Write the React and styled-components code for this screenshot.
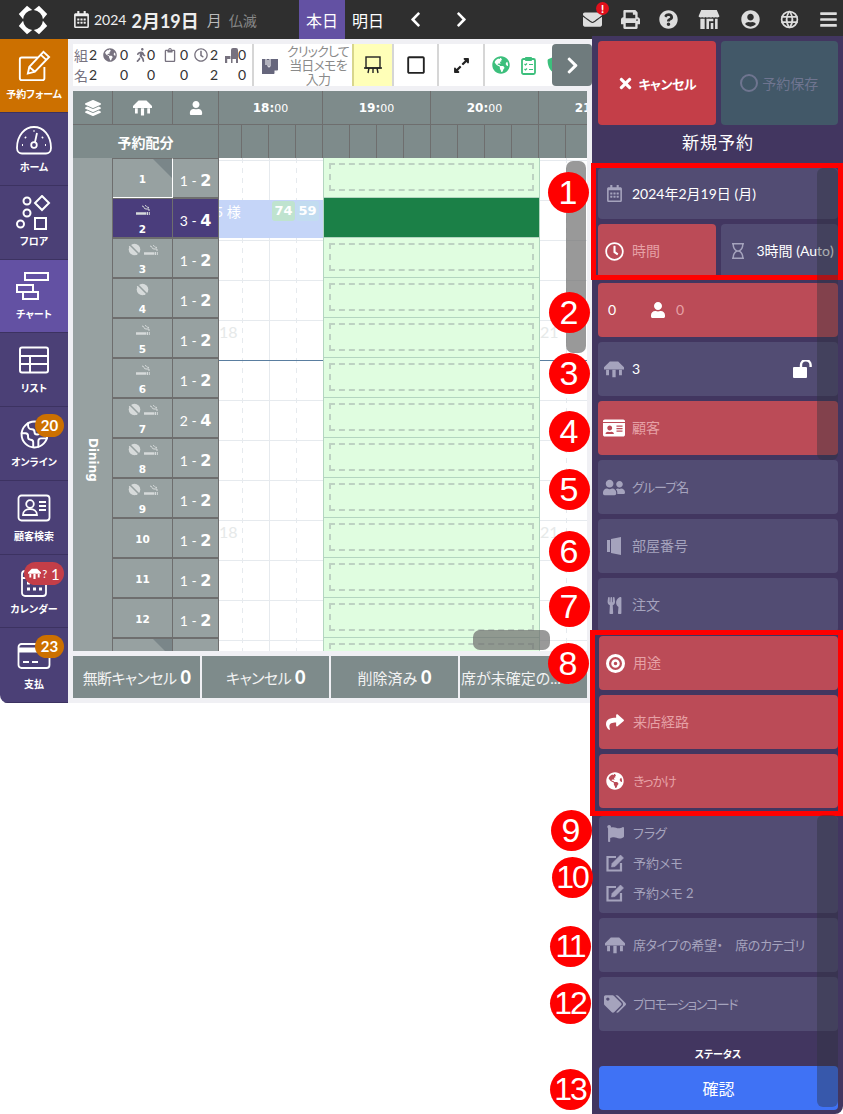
import React from "react";
import styled, { createGlobalStyle } from "styled-components";
import {
  FaBars, FaEnvelope, FaExpandAlt, FaFlag, FaGlobeAmericas, FaIdCard, FaLayerGroup,
  FaPrint, FaQuestionCircle, FaRegCalendarAlt, FaRegClipboard, FaRegClock, FaRegHourglass,
  FaRegSquare, FaShare, FaTags, FaTimes, FaUser, FaUserCircle, FaUserFriends,
  FaUtensils, FaWalking, FaShieldAlt, FaChevronLeft, FaChevronRight,
} from "react-icons/fa";
import { TbWorld } from "react-icons/tb";
import { Earth } from "lucide-react";

const sans = `Lato, "Noto Sans CJK JP", sans-serif`;
const wide = `"DejaVu Sans", "Noto Sans CJK JP", sans-serif`;

const GlobalStyle = createGlobalStyle`
  html, body { margin: 0; padding: 0; background: #fff; }
  body {
    font-family: ${sans};
    font-feature-settings: "palt";
    width: 843px;
    height: 1114px;
    overflow: hidden;
  }
  * { box-sizing: border-box; }
`;

// drawings with no match in the icon packages
const TableIcon = ({ size = 20 }) => (
  <svg width={size} height={size} viewBox="0 0 24 24" fill="currentColor">
    <path d="M7 3h10l7 7v2.500H0V10z" />
    <path d="M2.500 13h3.500v6.500H2.500zM10 13h4v9h-4zM18 13h3.500v6.500H18z" />
  </svg>
);

const ChairIcon = () => (
  <svg width="13" height="15" viewBox="0 0 13 15" fill="currentColor">
    <path d="M6 2a2 2 0 0 1 2-2h3a2 2 0 0 1 2 2v13h-2v-4H7.500v4H6z" />
    <path d="M0 8h5.500v3H2.200v4H0z" />
  </svg>
);

const MemoIcon = () => (
  <svg width="16" height="19" viewBox="0 0 16 19" fill="currentColor">
    <path d="M0 3h16v11l-4 4H0z" />
    <path d="M12.500 18v-3.500H16z" fill="#fff" />
    <path d="M4 9V3a2 2 0 0 1 4 0v7a1 1 0 0 1-2 0V4" fill="none" stroke="#fff" strokeWidth="1" />
  </svg>
);

const ClipboardIcon = () => (
  <svg width="15" height="19" viewBox="0 0 15 19" fill="none" stroke="currentColor">
    <rect x="1" y="3" width="13" height="15" rx="1.500" strokeWidth="1.800" />
    <path d="M4.500 1.500h6v3h-6z" fill="currentColor" strokeWidth="1" />
    <path d="M3.500 8l1 1 1.500-1.500M3.500 13l1 1 1.500-1.500M8 8.500h4M8 13.500h4" strokeWidth="1.200" />
  </svg>
);

const UnlockIcon = () => (
  <svg width="20" height="18" viewBox="0 0 20 18" fill="none" stroke="#fff">
    <rect x="0" y="7" width="14" height="11" rx="1" fill="#fff" stroke="none" />
    <path d="M8 8V5a4.800 4.800 0 0 1 9.600 0v2" strokeWidth="2.400" />
  </svg>
);

const Smoke = () => (
  <svg width="14" height="10" viewBox="0 0 14 10" fill="none" stroke="currentColor">
    <path d="M0 8.500h10.500" strokeWidth="2.500" />
    <path d="M11.500 7v3M13.300 7v3" strokeWidth="1" />
    <path d="M6 1c3 0 1 3 4 3h3v2M9 .5c2 0 1 2 4 2" strokeWidth="1" />
  </svg>
);

const NoNet = () => (
  <svg width="13" height="13" viewBox="0 0 13 13">
    <circle cx="6.500" cy="6.500" r="5.800" fill="currentColor" />
    <path d="M1.500 1.500l10 10" stroke="#97a1a1" strokeWidth="1.600" />
    <path d="M1 3l8 9" stroke="currentColor" strokeWidth="1" />
  </svg>
);

const Logo = () => (
  <svg width="30" height="30" viewBox="0 0 30 30" fill="#fff">
    <path d="M9 .8l5.200 4.300A10 10 0 0 0 5.100 14.200L.8 9z" />
    <path d="M21 .8l-5.200 4.300A10 10 0 0 1 24.900 14.200L29.200 9z" />
    <path d="M9 29.200l5.200-4.300A10 10 0 0 1 5.100 15.800L.8 21z" />
    <path d="M21 29.200l-5.200-4.300A10 10 0 0 0 24.900 15.800L29.200 21z" />
  </svg>
);

const DoorIcon = () => (
  <svg width="16" height="18" viewBox="0 0 16 18" fill="currentColor">
    <path d="M1 3h3v12H1z" />
    <path d="M5 2l10-2v18l-10-2z" />
  </svg>
);

const EditIcon = () => (
  <svg width="20" height="20" viewBox="0 0 20 20" fill="none" stroke="currentColor">
    <path d="M11 4H2.500v13.500H16V10" strokeWidth="2.200" />
    <path d="M7 10.500L15.500 2l3 3L10 13.500l-3.500.5z" fill="currentColor" strokeWidth="0.600" />
  </svg>
);

const navIcons = {
  form: (
    <svg width="36" height="34" viewBox="0 0 36 36" fill="none" stroke="#fff" strokeWidth="2">
      <path d="M22 9H5a2 2 0 0 0-2 2v20a2 2 0 0 0 2 2h22a2 2 0 0 0 2-2V19" />
      <path d="M13 19L28 3l6 5.500L19 24l-7.500 2z" />
      <path d="M25 6l6 5.500M13 19l6 5" />
    </svg>
  ),
  home: (
    <svg width="36" height="30" viewBox="0 0 36 30" fill="none" stroke="#fff" strokeWidth="1.800">
      <path d="M6 28.500h24c2.500 0 5-2 5-5.500C35 10 27 2 18 2S1 10 1 23c0 3.500 2.500 5.500 5 5.500z" />
      <circle cx="18" cy="20" r="2.800" />
      <path d="M19 17l2-9" />
      <path d="M6 20h1M30 20h-1M9 12l1 1M27 12l-1 1M17.500 6h1" strokeWidth="2" />
    </svg>
  ),
  floor: (
    <svg width="36" height="36" viewBox="0 0 36 36" fill="none" stroke="#fff" strokeWidth="2">
      <circle cx="11" cy="6" r="3.500" />
      <circle cx="11" cy="18" r="3.500" />
      <circle cx="4.500" cy="29" r="3.500" />
      <rect x="19" y="23" width="11" height="11" />
      <path d="M26 1l7 7-7 7-7-7z" />
    </svg>
  ),
  chart: (
    <svg width="36" height="30" viewBox="0 0 36 30" fill="none" stroke="#fff" strokeWidth="2">
      <rect x="9" y="1" width="23" height="7" />
      <rect x="1" y="13" width="16" height="7" />
      <rect x="7" y="20" width="15" height="7" />
    </svg>
  ),
  list: (
    <svg width="32" height="28" viewBox="0 0 32 28" fill="none" stroke="#fff" strokeWidth="2">
      <rect x="2" y="1.500" width="28" height="25" rx="2" />
      <path d="M2 10h28M2 18h28M12 10v16.500" />
    </svg>
  ),
  online: <Earth size={31} strokeWidth={1.500} color="#fff" />,
  customer: (
    <svg width="34" height="28" viewBox="0 0 34 28" fill="none" stroke="#fff" strokeWidth="1.800">
      <rect x="1.500" y="1.500" width="31" height="25" rx="3" />
      <circle cx="13" cy="10" r="3.800" />
      <path d="M6 21c0-8 14-8 14 0zM22 8h7M22 12h7M22 16h7" />
    </svg>
  ),
  calendar: (
    <svg width="28" height="30" viewBox="0 0 28 30" fill="none" stroke="#fff" strokeWidth="1.800">
      <rect x="2" y="4" width="24" height="25" rx="3" />
      <path d="M2 11h24" />
      <path d="M7 16h3M13 16h3M19 16h3M7 22h3M13 22h3M19 22h3" strokeWidth="3" />
    </svg>
  ),
  payment: (
    <svg width="34" height="28" viewBox="0 0 34 28" fill="none" stroke="#fff" strokeWidth="1.800">
      <rect x="1.500" y="2" width="31" height="24" rx="3" />
      <path d="M1.500 8h31" strokeWidth="5" />
      <path d="M6 20h6M15 20h6" />
    </svg>
  ),
};

const navItems = [
  { key: "form", label: "予約フォーム", tone: "orange", h: 74 },
  { key: "home", label: "ホーム", h: 73 },
  { key: "floor", label: "フロア", h: 74 },
  { key: "chart", label: "チャート", tone: "active", h: 73 },
  { key: "list", label: "リスト", h: 74 },
  { key: "online", label: "オンライン", h: 74, badge: "20" },
  { key: "customer", label: "顧客検索", h: 74 },
  { key: "calendar", label: "カレンダー", h: 73, alert: "1" },
  { key: "payment", label: "支払", h: 75, badge: "23" },
];

const tables = [
  { n: 1, cap: ["1", "2"], notch: true, white: true },
  { n: 2, cap: ["3", "4"], smoke: true, selected: true },
  { n: 3, cap: ["1", "2"], smoke: true, noNet: true },
  { n: 4, cap: ["1", "2"], noNet: true },
  { n: 5, cap: ["1", "2"], smoke: true, mark: true },
  { n: 6, cap: ["1", "2"], smoke: true, blue: true },
  { n: 7, cap: ["2", "4"], smoke: true, noNet: true },
  { n: 8, cap: ["1", "2"], smoke: true, noNet: true },
  { n: 9, cap: ["1", "2"], smoke: true, noNet: true },
  { n: 10, cap: ["1", "2"], mark: true },
  { n: 11, cap: ["1", "2"] },
  { n: 12, cap: ["1", "2"] },
  { n: "", cap: ["", ""], notch: true },
];

const steps = [
  ["1", 568, 192], ["2", 569, 312], ["3", 569, 373], ["4", 569, 431], ["5", 569, 489],
  ["6", 569, 551], ["7", 569, 606], ["8", 568, 663], ["9", 571, 830], ["10", 572, 877],
  ["11", 570, 946], ["12", 570, 1003], ["13", 570, 1089],
];

const stats = [
  { label: "組", alt: "名", top: "2", bottom: "2", w: [15, 14] },
  { icon: <FaGlobeAmericas size={14} />, top: "0", bottom: "0", w: [17, 15] },
  { icon: <FaWalking size={14} />, top: "0", bottom: "0", w: [12, 16] },
  { icon: <FaRegClipboard size={14} />, top: "0", bottom: "0", w: [17, 14] },
  { icon: <FaRegClock size={14} />, top: "2", bottom: "2", w: [16, 15] },
  { icon: <ChairIcon />, top: "0", bottom: "0", w: [13, 12] },
];

const quarters = [23, 27, 27, 27, 27, 27, 27, 27, 27, 27, 27, 27, 27, 27, 27, 27];

const App = () => (
  <>
    <GlobalStyle />
    <Page>
      <TopBar>
        <LogoCell><Logo /></LogoCell>
        <DateBox>
          <FaRegCalendarAlt size={17} />
          <Year>2024</Year>
          <BigDate>2月19日</BigDate>
          <Weekday>月</Weekday>
          <Rokuyo>仏滅</Rokuyo>
        </DateBox>
        <DayTab $active>本日</DayTab>
        <DayTab>明日</DayTab>
        <Pager><FaChevronLeft size={17} /><FaChevronRight size={17} /></Pager>
        <TopIcons>
          <MailIcon>
            <FaEnvelope size={19} />
            <MailDot>!</MailDot>
          </MailIcon>
          <FaPrint size={19} />
          <FaQuestionCircle size={19} />
          <StoreIcon viewBox="0 0 24 22" fill="currentColor">
            <path d="M3 0h18l3 7c0 2-3 2-4 1-1 1-3 1-4 0-1 1-3 1-4 0-1 1-3 1-4 0-1 1-3 1-4 0-1 1-4 1-4-1z" />
            <path d="M2 10h5v12H2zM9 10h8v3h-5v9H9zM19 10h3v12h-3zM14 15h3v7h-3z" />
          </StoreIcon>
          <FaUserCircle size={19} />
          <TbWorld size={21} />
          <FaBars size={19} />
        </TopIcons>
      </TopBar>

      <Body>
        <Sidebar>
          {navItems.map((item) => (
            <NavItem key={item.key} $tone={item.tone} $h={item.h}>
              <NavIcon>{navIcons[item.key]}</NavIcon>
              <NavLabel>{item.label}</NavLabel>
              {item.badge && <NavBadge>{item.badge}</NavBadge>}
              {item.alert && <NavAlert><TableIcon size={13} />?<b>{item.alert}</b></NavAlert>}
            </NavItem>
          ))}
        </Sidebar>

        <Main>
          <Toolbar>
            <Stats>
              {stats.map((s, i) => (
                <React.Fragment key={i}>
                  <StatHead $w={s.w[0]}>{s.label || s.icon}</StatHead>
                  <StatNum $w={s.w[1]}>{s.top}</StatNum>
                </React.Fragment>
              ))}
              {stats.map((s, i) => (
                <React.Fragment key={i}>
                  <StatHead $w={s.w[0]}>{s.alt}</StatHead>
                  <StatNum $w={s.w[1]}>{s.bottom}</StatNum>
                </React.Fragment>
              ))}
            </Stats>
            <MemoCell>
              <MemoIcon />
              <MemoText>クリックして<br />当日メモを<br />入力</MemoText>
            </MemoCell>
            <ToolCell $yellow $w={40}>
              <svg width="20" height="20" viewBox="0 0 20 20" fill="none" stroke="#222" strokeWidth="1.400">
                <rect x="3" y="2" width="14" height="11" />
                <path d="M1 13h18M6 13l-1 5M10 13v5M14 13l1 5" />
              </svg>
            </ToolCell>
            <ToolCell $w={45}><FaRegSquare size={20} /></ToolCell>
            <ToolCell $w={46}><FaExpandAlt size={17} /></ToolCell>
            <GreenCell>
              <FaGlobeAmericas size={18} />
              <ClipboardIcon />
              <FaShieldAlt size={18} />
            </GreenCell>
          </Toolbar>
          <NextButton><FaChevronRight size={19} /></NextButton>

          <Schedule>
            <HeadRow>
              <HeadCell $w={40}><FaLayerGroup size={16} /></HeadCell>
              <HeadCell $w={60}><TableIcon size={19} /></HeadCell>
              <HeadCell $w={46}><FaUser size={14} /></HeadCell>
              <HourCell $w={104}>18:<small>00</small></HourCell>
              <HourCell $w={108}>19:<small>00</small></HourCell>
              <HourCell $w={108}>20:<small>00</small></HourCell>
              <HourCell $w={108}>21:<small>00</small></HourCell>
            </HeadRow>
            <SubRow>
              <SplitCell>予約配分</SplitCell>
              {quarters.map((w, i) => <QuarterCell key={i} $w={w} />)}
            </SubRow>
            <Grid>
              <ZoneCell>Dining</ZoneCell>
              <Rows>
                {tables.map((t) => (
                  <Row key={t.n || "next"}>
                    <TableCell $selected={t.selected} $white={t.white}>
                      {t.notch && <Notch />}
                      {(t.smoke || t.noNet) && (
                        <TableMarks>
                          {t.noNet && <NoNet />}
                          {t.smoke && <Smoke />}
                        </TableMarks>
                      )}
                      <TableNo>{t.n}</TableNo>
                    </TableCell>
                    <CapCell $selected={t.selected}>
                      {t.cap[0] && <>{t.cap[0]} - <b>{t.cap[1]}</b></>}
                    </CapCell>
                    <OpenCell $blue={t.blue} $w={104}>
                      {t.mark && <GhostHour>18</GhostHour>}
                      {t.selected && (
                        <Booking>
                          <BookName>5 様</BookName>
                          <Pill $tone="#bfe3cf">74</Pill>
                          <Pill $tone="#c2dcf0">59</Pill>
                        </Booking>
                      )}
                    </OpenCell>
                    <SlotCell $taken={t.selected}>{!t.selected && <DashBox />}</SlotCell>
                    <OpenCell $blue={t.blue} $w={48} $tail>
                      {t.mark && <GhostHour>21</GhostHour>}
                    </OpenCell>
                  </Row>
                ))}
              </Rows>
              <VScroll />
              <HScroll />
            </Grid>
          </Schedule>

          <Tabs>
            <Tab $tight>無断キャンセル<b>0</b></Tab>
            <Tab $tight>キャンセル<b>0</b></Tab>
            <Tab>削除済み<b>0</b></Tab>
            <Tab $start>席が未確定の...<b>0</b></Tab>
          </Tabs>
        </Main>

        <Panel>
          <ActionRow>
            <ActionButton $tone="#c43e48"><FaTimes size={17} /> キャンセル</ActionButton>
            <ActionButton $tone="#425868" $muted><CircleMark />予約保存</ActionButton>
          </ActionRow>
          <PanelTitle>新規予約</PanelTitle>
          <FrameGroup>
            <Field $h={51}>
              <FieldIcon $muted><FaRegCalendarAlt size={17} /></FieldIcon>
              <FieldText $on>2024年2月19日 (月)</FieldText>
            </Field>
            <SplitRow>
              <Field $red $half>
                <FieldIcon><FaRegClock size={19} /></FieldIcon>
                <FieldText $red>時間</FieldText>
              </Field>
              <Field $half>
                <FieldIcon $muted $w={24}><FaRegHourglass size={16} /></FieldIcon>
                <FieldText $on>3時間 (Auto)</FieldText>
              </Field>
            </SplitRow>
            <RedFrame $top={-5} $bottom={-2} $left={-7} />
          </FrameGroup>
          <Field $red>
            <FieldText $on $w={39} $indent>0</FieldText>
            <FieldIcon><FaUser size={16} /></FieldIcon>
            <FieldText $red>0</FieldText>
          </Field>
          <Field>
            <FieldIcon $muted><TableIcon size={20} /></FieldIcon>
            <FieldText $on>3</FieldText>
            <Unlock><UnlockIcon /></Unlock>
          </Field>
          <Field $red>
            <FieldIcon><FaIdCard size={22} /></FieldIcon>
            <FieldText $red>顧客</FieldText>
          </Field>
          <Field>
            <FieldIcon $muted><FaUserFriends size={23} /></FieldIcon>
            <FieldText $tight>グループ名</FieldText>
          </Field>
          <Field>
            <FieldIcon $muted><DoorIcon /></FieldIcon>
            <FieldText>部屋番号</FieldText>
          </Field>
          <Field>
            <FieldIcon $muted><FaUtensils size={17} /></FieldIcon>
            <FieldText>注文</FieldText>
          </Field>
          <FrameGroup $inset>
            <Field $red>
              <FieldIcon>
                <svg width="19" height="19" viewBox="0 0 19 19" fill="none" stroke="#fff">
                  <circle cx="9.500" cy="9.500" r="8" strokeWidth="3" />
                  <circle cx="9.500" cy="9.500" r="3" strokeWidth="2.500" />
                </svg>
              </FieldIcon>
              <FieldText $red>用途</FieldText>
            </Field>
            <Field $red>
              <FieldIcon><FaShare size={18} /></FieldIcon>
              <FieldText $red>来店経路</FieldText>
            </Field>
            <Field $red>
              <FieldIcon><FaGlobeAmericas size={18} /></FieldIcon>
              <FieldText $red $tight>きっかけ</FieldText>
            </Field>
            <RedFrame $top={-6} $bottom={-8} $left={-9} />
          </FrameGroup>
          <NoteField>
            <NoteLine><FieldIcon $muted><FaFlag size={17} /></FieldIcon><FieldText $small>フラグ</FieldText></NoteLine>
            <NoteLine><FieldIcon $muted><EditIcon /></FieldIcon><FieldText $small>予約メモ</FieldText></NoteLine>
            <NoteLine><FieldIcon $muted><EditIcon /></FieldIcon><FieldText $small>予約メモ 2</FieldText></NoteLine>
          </NoteField>
          <Field $inset>
            <FieldIcon $muted><TableIcon size={20} /></FieldIcon>
            <FieldText $small $squeeze={0.4}>席タイプの希望・　席のカテゴリ</FieldText>
          </Field>
          <Field $inset>
            <FieldIcon $muted><FaTags size={22} /></FieldIcon>
            <FieldText $small $squeeze={1.4}>プロモーションコード</FieldText>
          </Field>
          <StatusLabel>ステータス</StatusLabel>
          <ConfirmButton>確認</ConfirmButton>
          <PanelScroll $top={132} $h={292} />
          <PanelScroll $top={779} $h={292} />
          {steps.map(([n, x, y]) => (
            <Step key={n} $x={x - 592} $y={y - 36} $two={n.length > 1}>{n}</Step>
          ))}
        </Panel>
      </Body>
    </Page>
  </>
);

export default App;

const Page = styled.div`
  position: relative;
  width: 843px;
  height: 1114px;
  background: #fff;
  overflow: hidden;
`;

const TopBar = styled.header`
  height: 39px;
  background: #2f2f2f;
  color: #fff;
  display: flex;
  align-items: center;
`;

const LogoCell = styled.div`
  width: 66px;
  display: flex;
  justify-content: center;
`;

const DateBox = styled.div`
  width: 233px;
  padding-left: 7px;
  display: flex;
  align-items: center;
  color: #eee;
  svg { flex: none; }
`;

const Year = styled.span`
  font-size: 14px;
  margin-left: 4px;
`;

const BigDate = styled.span`
  font-size: 18px;
  font-weight: 700;
  margin-left: 5px;
`;

const Weekday = styled.span`
  font-size: 15px;
  color: #bbb;
  margin-left: 8px;
`;

const Rokuyo = styled.span`
  font-size: 14px;
  color: #888;
  margin-left: 7px;
`;

const DayTab = styled.div`
  width: 46px;
  height: 39px;
  display: flex;
  align-items: center;
  justify-content: center;
  font-size: 16px;
  background: ${(p) => (p.$active ? "#6351a3" : "transparent")};
`;

const Pager = styled.div`
  width: 63px;
  margin-left: 16px;
  display: flex;
  justify-content: space-between;
`;

const TopIcons = styled.div`
  margin-left: auto;
  width: 260px;
  padding-right: 5px;
  display: flex;
  align-items: center;
  justify-content: space-between;
  color: #ddd;
`;

const MailIcon = styled.div`
  position: relative;
  display: flex;
`;

const MailDot = styled.span`
  position: absolute;
  top: -8px;
  right: -7px;
  width: 13px;
  height: 13px;
  border-radius: 50%;
  background: #e0101c;
  color: #fff;
  font-size: 11px;
  font-weight: 900;
  line-height: 13px;
  text-align: center;
`;

const StoreIcon = styled.svg`
  width: 24px;
  height: 19px;
`;

const Body = styled.div`
  display: flex;
  align-items: flex-start;
`;

const Sidebar = styled.nav`
  width: 68px;
  height: 664px;
  background: #4b4076;
  border-bottom-left-radius: 8px;
  overflow: hidden;
`;

const NavItem = styled.div`
  position: relative;
  height: ${(p) => p.$h}px;
  display: flex;
  flex-direction: column;
  align-items: center;
  justify-content: flex-end;
  padding-bottom: 11px;
  color: #fff;
  border-bottom: 1px solid #3c3261;
  background: ${(p) => (p.$tone === "orange" ? "#cc7000" : p.$tone === "active" ? "#6351a3" : "transparent")};
`;

const NavIcon = styled.div`
  flex: 1;
  display: flex;
  align-items: center;
  justify-content: center;
  padding-top: 6px;
`;

const NavLabel = styled.div`
  font-size: 10px;
  font-weight: 700;
  line-height: 14px;
  white-space: nowrap;
`;

const NavBadge = styled.span`
  position: absolute;
  top: 7px;
  right: 4px;
  width: 29px;
  height: 23px;
  border-radius: 12px;
  background: #cc7000;
  font-size: 15px;
  font-weight: 700;
  line-height: 23px;
  text-align: center;
`;

const NavAlert = styled.span`
  position: absolute;
  top: 7px;
  right: 4px;
  width: 40px;
  height: 23px;
  border-radius: 12px;
  background: #c43e48;
  font-size: 11px;
  display: flex;
  align-items: center;
  justify-content: center;
  gap: 1px;
  b { font-size: 15px; font-weight: 400; margin-left: 3px; }
`;

const Main = styled.main`
  position: relative;
  width: 524px;
  height: 664px;
  background: #f0f0f4;
  padding: 5px 5px 0 5px;
`;

const Toolbar = styled.div`
  height: 42px;
  display: flex;
  background: #fff;
  overflow: hidden;
`;

const Stats = styled.div`
  width: 179px;
  flex: none;
  display: flex;
  flex-wrap: wrap;
  align-content: center;
  padding-left: 1px;
  font-size: 14px;
`;

const StatHead = styled.span`
  width: ${(p) => p.$w}px;
  height: 20px;
  display: flex;
  align-items: center;
  color: #77727f;
`;

const StatNum = styled.span`
  width: ${(p) => p.$w}px;
  height: 20px;
  line-height: 20px;
  color: #333;
`;

const MemoCell = styled.div`
  width: 100px;
  flex: none;
  border-left: 2px solid #d6d6d6;
  display: flex;
  align-items: center;
  gap: 9px;
  padding-left: 8px;
  color: #66667c;
  svg { flex: none; }
`;

const MemoText = styled.div`
  font-size: 13px;
  letter-spacing: -0.8px;
  line-height: 14px;
  color: #8a8a8a;
  text-align: center;
  white-space: nowrap;
`;

const ToolCell = styled.div`
  width: ${(p) => p.$w}px;
  flex: none;
  display: flex;
  align-items: center;
  justify-content: center;
  border-left: 2px solid ${(p) => (p.$yellow ? "#d8d68c" : "#d6d6d6")};
  background: ${(p) => (p.$yellow ? "#ffffb8" : "#fff")};
  color: #222;
`;

const GreenCell = styled.div`
  border-left: 2px solid #d6d6d6;
  padding-left: 7px;
  display: flex;
  align-items: center;
  gap: 11px;
  color: #3cbf7c;
  svg { flex: none; }
`;

const NextButton = styled.div`
  position: absolute;
  top: 5px;
  right: 0;
  width: 40px;
  height: 42px;
  border-radius: 4px;
  background: #6f7b7d;
  color: #fff;
  display: flex;
  align-items: center;
  justify-content: center;
`;

const Schedule = styled.section`
  margin-top: 5px;
  height: 560px;
  overflow: hidden;
`;

const HeadRow = styled.div`
  height: 34px;
  display: flex;
  background: #7e8b8b;
  color: #fff;
  border-bottom: 1px solid #6e6e6e;
  overflow: hidden;
`;

const HeadCell = styled.div`
  width: ${(p) => p.$w}px;
  flex: none;
  display: flex;
  align-items: center;
  justify-content: center;
  border-right: 1px solid #6e6e6e;
`;

const HourCell = styled(HeadCell)`
  font-family: ${wide};
  font-size: 12px;
  font-weight: 700;
  padding-top: 1px;
  white-space: nowrap;
  small { font-size: 11px; font-weight: 400; }
`;

const SubRow = styled.div`
  height: 33px;
  display: flex;
  background: #7e8b8b;
  color: #fff;
`;

const SplitCell = styled.div`
  width: 146px;
  flex: none;
  display: flex;
  align-items: center;
  justify-content: center;
  font-size: 14px;
  font-weight: 700;
  border-right: 1px solid #6e6e6e;
`;

const QuarterCell = styled.div`
  width: ${(p) => p.$w}px;
  flex: none;
  border-right: 1px solid #6e6e6e;
`;

const Grid = styled.div`
  position: relative;
  display: flex;
  height: 493px;
  overflow: hidden;
`;

const ZoneCell = styled.div`
  width: 40px;
  flex: none;
  background: #97a1a1;
  border-right: 1px solid #6e6e6e;
  color: #fff;
  font-family: ${wide};
  font-size: 12px;
  font-weight: 700;
  writing-mode: vertical-rl;
  text-align: left;
  line-height: 38px;
  padding-top: 280px;
`;

const Rows = styled.div`
  flex: 1;
  min-width: 0;
`;

const Row = styled.div`
  display: flex;
  height: 40px;
`;

const TableCell = styled.div`
  position: relative;
  width: 60px;
  flex: none;
  display: flex;
  flex-direction: column;
  align-items: center;
  justify-content: center;
  gap: 7px;
  padding-top: 2px;
  color: #fff;
  background: ${(p) => (p.$selected ? "#4a3d7c" : "#97a1a1")};
  border-right: 1px solid ${(p) => (p.$white ? "#fff" : "#6e6e6e")};
  border-bottom: 1px solid ${(p) => (p.$white ? "#fff" : "#6e6e6e")};
  border-top: 1px solid #6e6e6e;
`;

const Notch = styled.span`
  position: absolute;
  top: 0;
  right: 0;
  width: 0;
  height: 0;
  border-top: 19px solid #7a8689;
  border-left: 19px solid transparent;
`;

const TableMarks = styled.div`
  display: flex;
  align-items: center;
  gap: 3px;
  color: #d6dada;
  height: 13px;
`;

const TableNo = styled.div`
  font-family: ${wide};
  font-size: 10.500px;
  font-weight: 700;
  line-height: 12px;
`;

const CapCell = styled.div`
  width: 46px;
  flex: none;
  display: flex;
  align-items: center;
  justify-content: center;
  padding-top: 5px;
  white-space: pre;
  color: #fff;
  font-size: 14px;
  background: ${(p) => (p.$selected ? "#4a3d7c" : "#97a1a1")};
  border-right: 1px solid #6e6e6e;
  border-bottom: 1px solid #6e6e6e;
  border-top: 1px solid #6e6e6e;
  b { font-family: ${wide}; font-size: 16px; font-weight: 700; }
`;

const OpenCell = styled.div`
  position: relative;
  width: ${(p) => p.$w}px;
  flex: none;
  background-color: #fff;
  background-image:
    linear-gradient(${(p) => (p.$blue ? "#5a7ea0" : "#e6eaee")}, ${(p) => (p.$blue ? "#5a7ea0" : "#e6eaee")}),
    linear-gradient(#e6eaee 50%, transparent 50%),
    linear-gradient(#e6eaee, #e6eaee),
    linear-gradient(#e6eaee 50%, transparent 50%);
  background-size: 100% 1px, 1px 10px, 1px 100%, 1px 10px;
  background-repeat: no-repeat, repeat-y, no-repeat, repeat-y;
  background-position:
    0 2px,
    ${(p) => (p.$tail ? "26px" : "23px")} 0,
    50px 0,
    77px 0;
`;

const GhostHour = styled.span`
  position: absolute;
  left: 0;
  top: 4px;
  font-size: 16px;
  line-height: 19px;
  color: #e6e9e9;
`;

const Booking = styled.div`
  position: absolute;
  inset: 2px 0 0 0;
  background: #c5d5f8;
  display: flex;
  align-items: flex-start;
  padding-top: 1px;
  color: #fff;
  font-size: 14px;
  font-weight: 700;
  overflow: hidden;
`;

const BookName = styled.span`
  width: 57px;
  margin-left: -4px;
  font-weight: 400;
  white-space: nowrap;
`;

const Pill = styled.span`
  height: 20px;
  width: 23px;
  margin-left: ${(p) => (p.$tone === "#bfe3cf" ? "0" : "1px")};
  border-radius: 3px;
  line-height: 20px;
  text-align: center;
  font-family: ${wide};
  font-size: 13px;
  background: ${(p) => p.$tone};
`;

const SlotCell = styled.div`
  width: 217px;
  flex: none;
  padding: 5px 5px 6px 5px;
  background: ${(p) => (p.$taken ? "#1b8047" : "#e0fde0")};
  border-bottom: 1px solid #b3d5c0;
  border-left: 1px solid #b3d5c0;
  border-right: 1px solid #b3d5c0;
`;

const DashBox = styled.div`
  height: 100%;
  border: 2px dashed #bdd2c2;
`;

const VScroll = styled.div`
  position: absolute;
  top: 3px;
  right: 1px;
  width: 20px;
  height: 192px;
  border-radius: 7px;
  background: rgba(110, 110, 110, 0.7);
`;

const HScroll = styled.div`
  position: absolute;
  bottom: 1px;
  left: 400px;
  width: 77px;
  height: 20px;
  border-radius: 7px;
  background: rgba(110, 110, 110, 0.7);
`;

const Tabs = styled.div`
  margin-top: 5px;
  display: flex;
  gap: 2px;
`;

const Tab = styled.div`
  width: 127px;
  height: 42px;
  background: #7e8b8b;
  color: #f2f2f2;
  font-size: 15px;
  letter-spacing: ${(p) => (p.$tight ? "-0.6px" : "0")};
  display: flex;
  align-items: center;
  justify-content: ${(p) => (p.$start ? "flex-start" : "center")};
  padding-left: ${(p) => (p.$start ? "1px" : "0")};
  white-space: nowrap;
  overflow: hidden;
  b { font-size: 18px; font-weight: 900; margin-left: 4px; color: #fff; }
`;

const Panel = styled.aside`
  position: relative;
  width: 251px;
  height: 1078px;
  margin-top: -3px;
  padding: 5px 5px 0 6px;
  background: #423660;
  border-bottom-right-radius: 8px;
  display: flex;
  flex-direction: column;
  gap: 5px;
  color: #fff;
`;

const ActionRow = styled.div`
  display: flex;
  gap: 5px;
`;

const ActionButton = styled.button`
  flex: 1;
  height: 84px;
  border: 0;
  border-radius: 4px;
  background: ${(p) => p.$tone};
  color: ${(p) => (p.$muted ? "#6f7590" : "#fff")};
  font-family: ${sans};
  font-feature-settings: "palt";
  font-size: ${(p) => (p.$muted ? "14px" : "13px")};
  letter-spacing: ${(p) => (p.$muted ? "0" : "-0.5px")};
  font-weight: ${(p) => (p.$muted ? 400 : 700)};
  display: flex;
  align-items: center;
  justify-content: center;
  gap: 4px;
  padding: 0;
`;

const CircleMark = styled.span`
  width: 18px;
  height: 18px;
  border: 2px solid #6f7590;
  border-radius: 50%;
`;

const PanelTitle = styled.div`
  height: 33px;
  font-size: 17px;
  letter-spacing: 1px;
  line-height: 26px;
  text-align: center;
`;

const FrameGroup = styled.div`
  position: relative;
  display: flex;
  flex-direction: column;
  gap: 5px;
  margin-left: ${(p) => (p.$inset ? "1px" : "0")};
  margin-top: ${(p) => (p.$inset ? "-1px" : "0")};
  margin-bottom: ${(p) => (p.$inset ? "2px" : "0")};
`;

const RedFrame = styled.div`
  position: absolute;
  top: ${(p) => p.$top}px;
  bottom: ${(p) => p.$bottom}px;
  left: ${(p) => p.$left}px;
  right: -5px;
  border: 5px solid #f00;
  pointer-events: none;
`;

const SplitRow = styled.div`
  display: flex;
  gap: 5px;
`;

const Field = styled.div`
  position: relative;
  flex: ${(p) => (p.$half ? "1 1 0" : "none")};
  min-width: 0;
  height: ${(p) => p.$h || 54}px;
  margin-left: ${(p) => (p.$inset ? "1px" : "0")};
  border-radius: 4px;
  background: ${(p) => (p.$red ? "#bb4b57" : "#524c73")};
  padding-left: 5px;
  display: flex;
  align-items: center;
`;

const FieldIcon = styled.span`
  width: ${(p) => p.$w || 22}px;
  margin-right: 7px;
  flex: none;
  display: flex;
  justify-content: center;
  color: ${(p) => (p.$muted ? "#a5a3bd" : "#fff")};
`;

const FieldText = styled.span`
  width: ${(p) => (p.$w ? `${p.$w}px` : "auto")};
  margin-left: ${(p) => (p.$indent ? "5px" : "0")};
  padding-bottom: 2px;
  font-size: ${(p) => (p.$small || p.$tight ? "13px" : "14px")};
  letter-spacing: ${(p) => (p.$tight ? "-0.9px" : p.$squeeze ? `-${p.$squeeze}px` : "0")};
  white-space: nowrap;
  color: ${(p) => (p.$on ? "#fff" : p.$red ? "#e6a1a6" : "#a5a3bd")};
`;

const Unlock = styled.span`
  margin-left: auto;
  margin-right: 25px;
  display: flex;
`;

const NoteField = styled.div`
  flex: none;
  height: 97px;
  margin-left: 1px;
  margin-top: 1px;
  padding: 2px 0 0 5px;
  border-radius: 4px;
  background: #524c73;
  display: flex;
  flex-direction: column;
`;

const NoteLine = styled.div`
  height: 30px;
  display: flex;
  align-items: center;
`;

const StatusLabel = styled.div`
  height: 25px;
  padding-top: 11px;
  font-size: 10px;
  font-weight: 700;
  line-height: 14px;
  text-align: center;
`;

const ConfirmButton = styled.button`
  flex: none;
  height: 44px;
  margin-left: 1px;
  border: 0;
  border-radius: 4px;
  background: #3f72f5;
  color: #fff;
  font-family: ${sans};
  font-size: 16px;
`;

const PanelScroll = styled.div`
  position: absolute;
  top: ${(p) => p.$top}px;
  right: 5px;
  width: 21px;
  height: ${(p) => p.$h}px;
  border-radius: 6px;
  background: rgba(45, 50, 60, 0.4);
`;

const Step = styled.div`
  position: absolute;
  left: ${(p) => p.$x}px;
  top: ${(p) => p.$y}px;
  width: 41px;
  height: 41px;
  margin: -20.500px 0 0 -20.500px;
  border-radius: 50%;
  background: #f00;
  color: #fff;
  font-family: "Liberation Sans", sans-serif;
  font-size: ${(p) => (p.$two ? "32px" : "34px")};
  letter-spacing: ${(p) => (p.$two ? "-2px" : "0")};
  line-height: 41px;
  text-align: center;
`;
